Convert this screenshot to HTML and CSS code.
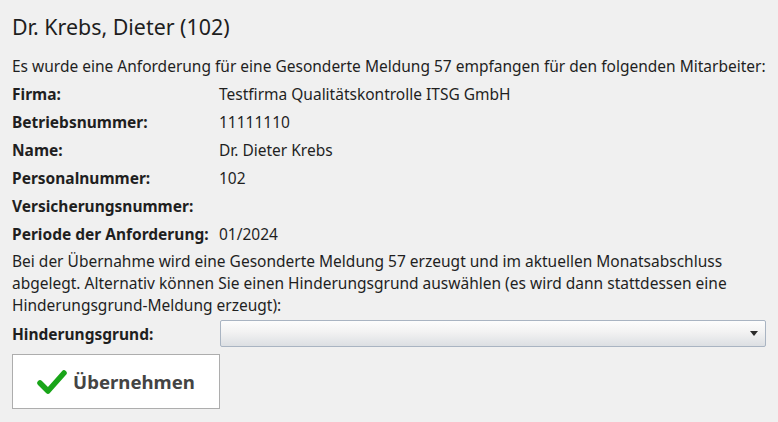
FILE: index.html
```html
<!DOCTYPE html>
<html lang="de">
<head>
<meta charset="utf-8">
<title>Gesonderte Meldung 57</title>
<link rel="stylesheet" href="styles.css">
</head>
<body>
<div class="page">
  <h1 class="title">Dr. Krebs, Dieter (102)</h1>
  <p class="intro">Es wurde eine Anforderung für eine Gesonderte Meldung 57 empfangen für den folgenden Mitarbeiter:</p>
  <dl class="details">
    <dt>Firma:</dt><dd>Testfirma Qualitätskontrolle ITSG GmbH</dd>
    <dt>Betriebsnummer:</dt><dd>11111110</dd>
    <dt>Name:</dt><dd>Dr. Dieter Krebs</dd>
    <dt>Personalnummer:</dt><dd>102</dd>
    <dt>Versicherungsnummer:</dt><dd></dd>
    <dt>Periode der Anforderung:</dt><dd>01/2024</dd>
  </dl>
  <p class="note">Bei der Übernahme wird eine Gesonderte Meldung 57 erzeugt und im aktuellen Monatsabschluss abgelegt. Alternativ können Sie einen Hinderungsgrund auswählen (es wird dann stattdessen eine Hinderungsgrund-Meldung erzeugt):</p>
  <div class="form-row">
    <label class="form-label">Hinderungsgrund:</label>
    <div class="select">
      <span class="select-value"></span>
      <span class="select-arrow"></span>
    </div>
  </div>
  <button class="btn" type="button">
    <svg class="btn-icon" width="30" height="26" viewBox="0 0 30 26" aria-hidden="true">
      <path d="M3 14 L11 22 L27 4" fill="none" stroke="#19a519" stroke-width="5.5" stroke-linecap="round" stroke-linejoin="round"/>
    </svg>
    <span class="btn-label">Übernehmen</span>
  </button>
</div>
</body>
</html>
```

FILE: styles.css
```css
html, body {
  margin: 0;
  padding: 0;
  background: #f0f0f0;
}

body {
  font-family: "Noto Sans", "Open Sans", sans-serif;
  color: #1f1f1f;
  font-size: 15.5px;
}

.page {
  padding: 12px 12px 0 12px;
  width: 754px;
}

.title {
  margin: 0;
  font-size: 21.4px;
  font-weight: 400;
  line-height: 30px;
  color: #1e1e1e;
}

.intro {
  margin: 10px 0 0 0;
  line-height: 28px;
  white-space: nowrap;
}

.details {
  margin: 0;
  display: grid;
  grid-template-columns: 207px 1fr;
  grid-auto-rows: 28px;
  align-items: center;
}

.details dt {
  font-weight: 700;
}

.details dd {
  margin: 0;
}

.note {
  margin: 2px 0 0 0;
  line-height: 22px;
}

.form-row {
  margin-top: 4px;
  display: grid;
  grid-template-columns: 208px 1fr;
  align-items: center;
}

.form-label {
  font-weight: 700;
}

.select {
  height: 27px;
  box-sizing: border-box;
  border: 1px solid #a9b4c2;
  border-radius: 2px;
  background: linear-gradient(#fdfdfd 0%, #f2f2f2 45%, #dcdfe3 100%);
  display: flex;
  align-items: center;
  justify-content: flex-end;
  padding-right: 7px;
}

.select-arrow {
  width: 0;
  height: 0;
  border-left: 4px solid transparent;
  border-right: 4px solid transparent;
  border-top: 5px solid #2b2b2b;
}

.btn {
  margin-top: 7px;
  width: 208px;
  height: 55px;
  box-sizing: border-box;
  border: 1px solid #adadad;
  background: #ffffff;
  display: flex;
  align-items: center;
  justify-content: center;
  gap: 6px;
  padding: 0;
  font-family: inherit;
  cursor: pointer;
}

.btn-icon {
  display: block;
}

.btn-label {
  font-size: 18.6px;
  font-weight: 700;
  color: #444444;
}
```
